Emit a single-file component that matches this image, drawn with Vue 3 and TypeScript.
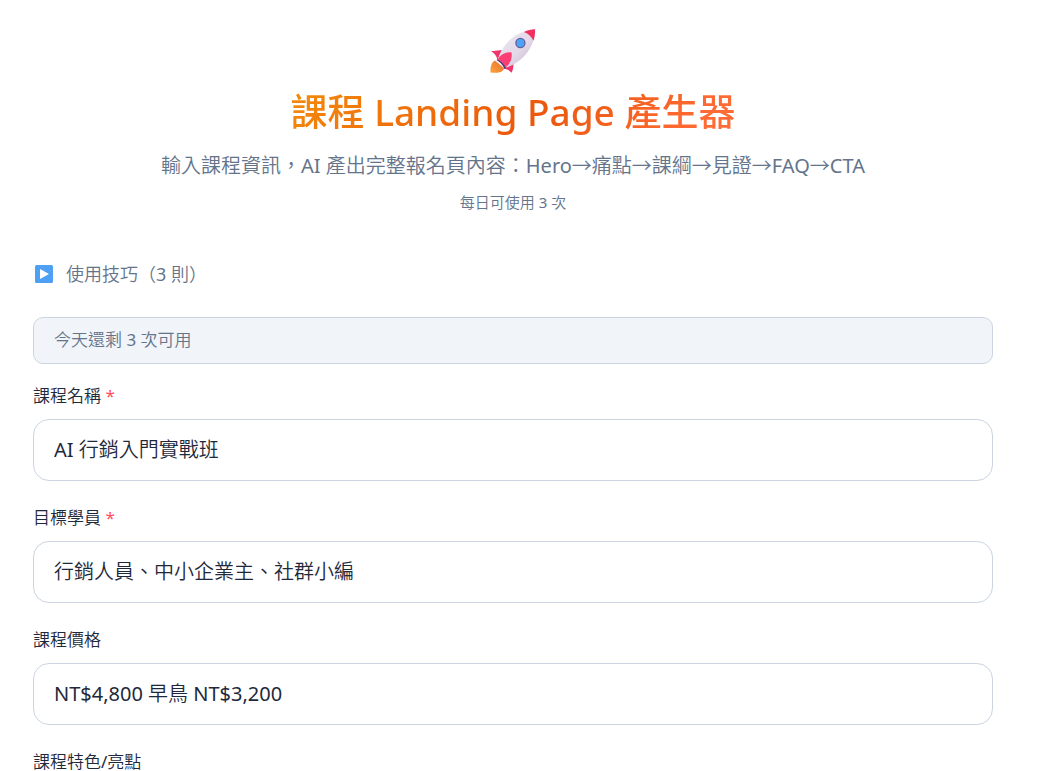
<script setup lang="ts">
import { ref } from 'vue'

interface Field {
  id: string
  label: string
  required: boolean
  multiline: boolean
  value: string
}

const remaining = ref<number>(3)

const fields = ref<Field[]>([
  { id: 'course-name', label: '課程名稱', required: true, multiline: false, value: 'AI 行銷入門實戰班' },
  { id: 'audience', label: '目標學員', required: true, multiline: false, value: '行銷人員、中小企業主、社群小編' },
  { id: 'price', label: '課程價格', required: false, multiline: false, value: 'NT$4,800 早鳥 NT$3,200' },
  { id: 'features', label: '課程特色/亮點', required: false, multiline: true, value: '' },
])
</script>

<template>
  <main class="page">
    <header class="hero">
      <svg class="rocket" viewBox="0 0 48 48" aria-hidden="true">
        <defs>
          <linearGradient id="hull" x1="0" y1="0" x2="1" y2="1">
            <stop offset="0" stop-color="#efe8f2" />
            <stop offset="0.55" stop-color="#e3d9e8" />
            <stop offset="1" stop-color="#c7b3d0" />
          </linearGradient>
          <linearGradient id="flame" x1="1" y1="0" x2="0" y2="1">
            <stop offset="0" stop-color="#e8702c" />
            <stop offset="1" stop-color="#fba33c" />
          </linearGradient>
        </defs>
        <path d="M6 33.5C3 35 1 39 1.500 45.500 5 46 9 46 11.500 45c2-1 3.500-2.500 3.500-4z" fill="url(#flame)" />
        <path d="M2 24.200 13 23 8.500 32.500C7.500 29 5.500 26 2 24.200z" fill="#f0356a" />
        <path d="M24 34.500c.8 4 .3 8-1.500 11.300-2-2.300-4.500-3.800-8-4.300z" fill="#f0356a" />
        <path d="M9 34C11 21 23 7.500 36 4.500c5-1 8.500 3 8.500 8.500C41 26 29 38 15 41c-1-3-3-5.500-6-7z" fill="url(#hull)" />
        <path d="M35 5c4-2 8-3 11-2.800.3 4-.3 8-1.500 11.500C42.500 10 39.500 6.500 35 5z" fill="#f0305f" />
        <path d="M7.500 33 9 32c3.500 1.500 6.500 4.500 8 8.500L15.500 42c-1.500-4-4.500-7-8-9z" fill="#443a86" />
        <path d="M8.500 32.500C11.500 27.500 17 24.500 22.500 25.500 23.500 31 21.500 36.500 16.500 40.500 15 37 12 34 8.500 32.500z" fill="#fb3f74" />
        <circle cx="31.400" cy="16" r="5.200" fill="#655f98" />
        <circle cx="31.400" cy="16" r="3.900" fill="#4aa5fa" />
      </svg>
      <h1 class="title">課程 Landing Page 產生器</h1>
      <p class="subtitle">輸入課程資訊，AI 產出完整報名頁內容：Hero<span class="arrow">→</span>痛點<span class="arrow">→</span>課綱<span class="arrow">→</span>見證<span class="arrow">→</span>FAQ<span class="arrow">→</span>CTA</p>
      <p class="quota">每日可使用 3 次</p>
    </header>

    <button type="button" class="tips">
      <svg class="play" viewBox="0 0 18 18" aria-hidden="true">
        <rect width="18" height="18" rx="1.500" fill="#4da0f4" />
        <path d="M5 4v10l9-5z" fill="#fff" />
      </svg>
      <span>使用技巧（3 則）</span>
    </button>

    <p class="notice" role="status">今天還剩 {{ remaining }} 次可用</p>

    <form class="form" @submit.prevent>
      <div v-for="field in fields" :key="field.id" class="field">
        <label class="label" :for="field.id">{{ field.label }}<span v-if="field.required" class="star"> *</span></label>
        <textarea v-if="field.multiline" :id="field.id" v-model="field.value" class="control" rows="4"></textarea>
        <input v-else :id="field.id" v-model="field.value" class="control" type="text" :required="field.required" />
      </div>
    </form>
  </main>
</template>

<style>
body {
  background: #fff;
}
</style>

<style scoped>
.page {
  box-sizing: border-box;
  height: 100vh;
  overflow: hidden;
  padding: 27px 46px 0 33px;
  color: #1e293b;
  font-family: "Noto Sans", "Noto Sans CJK TC DemiLight", "Noto Sans CJK TC", sans-serif;
  font-weight: 400;
}

.hero {
  display: flex;
  flex-direction: column;
  align-items: center;
  text-align: center;
}

.rocket {
  width: 48px;
  height: 48px;
}

.title {
  margin: 10px 0 0;
  font-family: "Noto Sans", "Noto Sans CJK TC", sans-serif;
  font-size: 37px;
  line-height: 54px;
  font-weight: 500;
  color: transparent;
  background: linear-gradient(135deg, #f48c0c, #ea580c 55%, #ff6b35 90%);
  background-clip: text;
  -webkit-background-clip: text;
}

.subtitle {
  margin: 10px 0 0;
  font-size: 20px;
  line-height: 32px;
  color: #64748b;
}

.arrow {
  font-family: "Noto Sans CJK TC DemiLight", "Noto Sans CJK TC", sans-serif;
}

.quota {
  margin: 8px 0 0;
  font-size: 15px;
  line-height: 24px;
  color: #64748b;
}

.tips {
  display: flex;
  align-items: center;
  gap: 13px;
  margin: 44px 0 0;
  padding: 0 2px;
  border: 0;
  background: none;
  color: #64748b;
  font: inherit;
  font-size: 18px;
  line-height: 32px;
  cursor: pointer;
}

.play {
  width: 18px;
  height: 18px;
}

.notice {
  margin: 27px 0 0;
  padding: 8px 20px 9px;
  border: 1px solid #cbd5e1;
  border-radius: 10px;
  background: #f1f5f9;
  color: #64748b;
  font-size: 17px;
  line-height: 28px;
}

.form {
  display: flex;
  flex-direction: column;
  gap: 28px;
  margin-top: 23px;
}

.field {
  display: flex;
  flex-direction: column;
  gap: 14px;
}

.label {
  font-size: 17px;
  line-height: 18px;
}

.star {
  color: #ff4d5e;
}

.control {
  box-sizing: border-box;
  width: 100%;
  padding: 13px 20px 17px;
  border: 1px solid #cbd5e1;
  border-radius: 16px;
  background: #fff;
  color: #1e293b;
  font: inherit;
  font-size: 20px;
  line-height: 30px;
  outline: none;
  resize: none;
}

input.control {
  height: 62px;
}
</style>
